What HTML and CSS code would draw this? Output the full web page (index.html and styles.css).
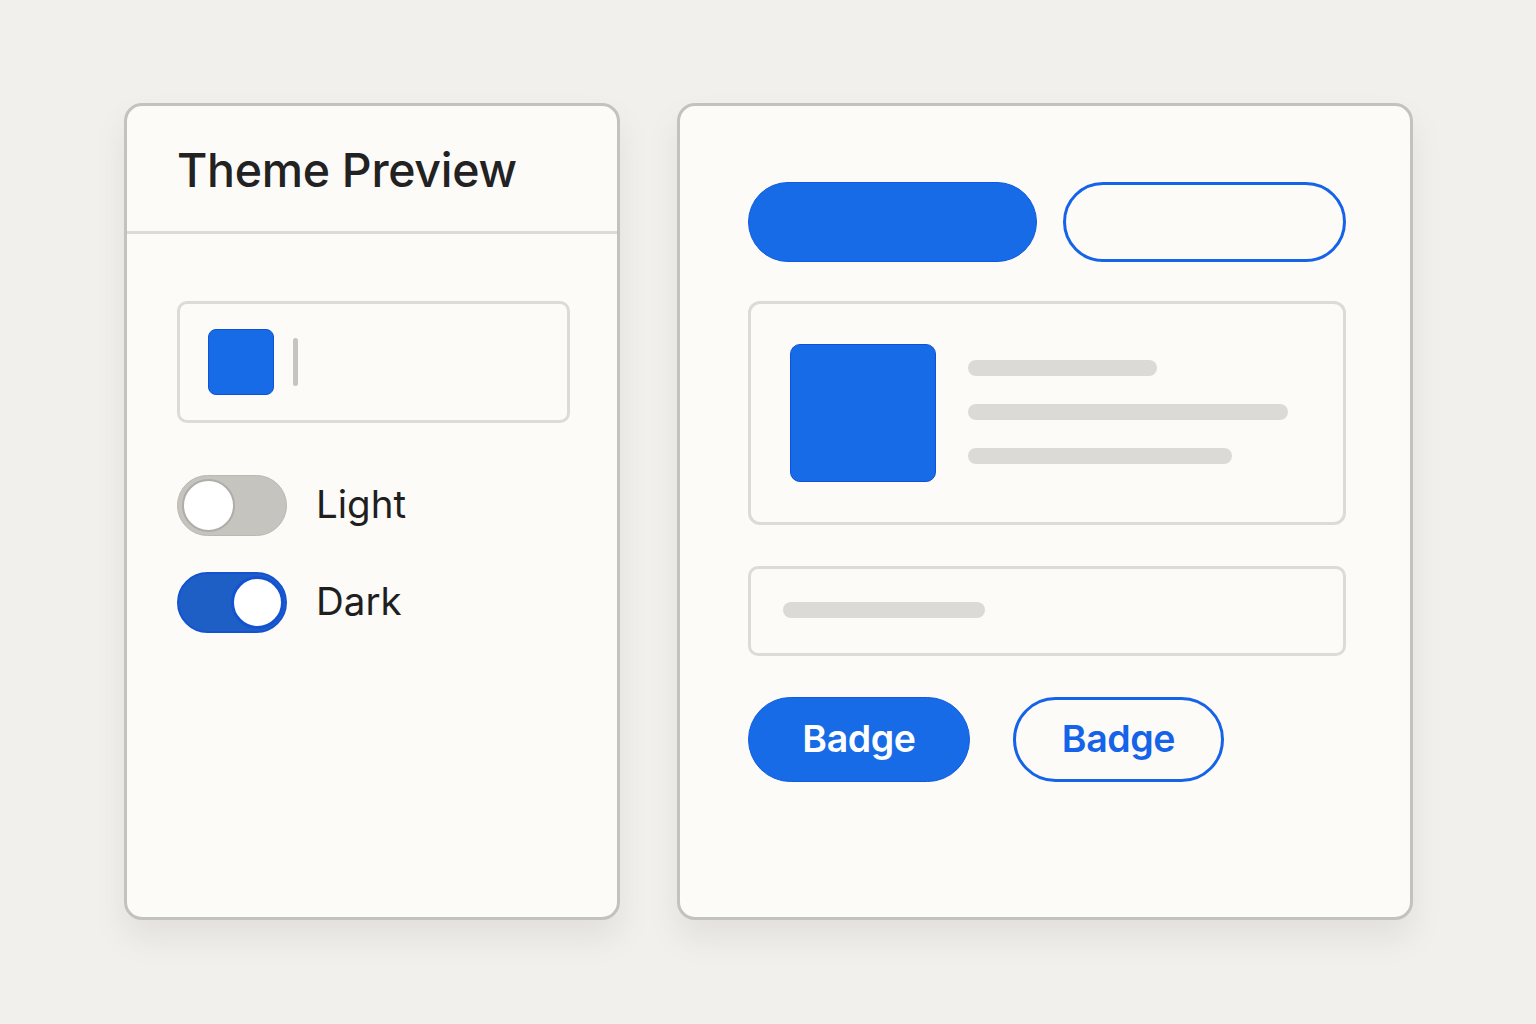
FILE: index.html
```html
<!DOCTYPE html>
<html lang="en">
<head>
<meta charset="utf-8">
<title>Theme Preview</title>
<link rel="stylesheet" href="styles.css">
</head>
<body>
<main class="stage">
  <section class="panel panel-left">
    <header class="panel-header">
      <h1 class="title">Theme Preview</h1>
    </header>
    <div class="left-body">
      <div class="color-input">
        <span class="swatch"></span>
        <span class="caret"></span>
      </div>
      <div class="toggle-row first">
        <span class="toggle off"><span class="knob"></span></span>
        <span class="toggle-label">Light</span>
      </div>
      <div class="toggle-row">
        <span class="toggle on"><span class="knob"></span></span>
        <span class="toggle-label">Dark</span>
      </div>
    </div>
  </section>
  <section class="panel panel-right">
    <div class="btn-row">
      <span class="btn btn-filled"></span>
      <span class="btn btn-outline"></span>
    </div>
    <div class="card">
      <span class="card-media"></span>
      <div class="card-lines">
        <span class="line l1"></span>
        <span class="line l2"></span>
        <span class="line l3"></span>
      </div>
    </div>
    <div class="field">
      <span class="line l4"></span>
    </div>
    <div class="badge-row">
      <span class="badge badge-filled">Badge</span>
      <span class="badge badge-outline">Badge</span>
    </div>
  </section>
</main>
</body>
</html>
```

FILE: styles.css
```css
* { box-sizing: border-box; }
html, body { margin: 0; padding: 0; }
body {
  width: 1536px;
  height: 1024px;
  background: #f2f0ec;
  font-family: Inter, "Noto Sans", "Liberation Sans", sans-serif;
  color: #222222;
  overflow: hidden;
}
.stage {
  display: flex;
  gap: 57px;
  padding: 103px 0 0 124px;
}
.panel {
  background: #fcfbf8;
  border: 3px solid #c4c2bd;
  border-radius: 18px;
  height: 817px;
  box-shadow: 0 18px 30px rgba(120, 115, 105, 0.12);
}
.panel-left { width: 496px; }
.panel-right {
  width: 736px;
  padding: 76px 0 0 68px;
}
.panel-header {
  height: 128px;
  border-bottom: 3px solid #dddbd6;
  display: flex;
  align-items: center;
  padding: 2px 0 0 50px;
}
.title {
  margin: 0;
  font-size: 46.5px;
  font-weight: 500;
  letter-spacing: -0.3px;
  color: #222222;
}
.left-body { padding: 67px 0 0 50px; }
.color-input {
  width: 393px;
  height: 122px;
  border: 3px solid #dddbd6;
  border-radius: 10px;
  display: flex;
  align-items: center;
  padding-left: 28px;
  gap: 19px;
}
.swatch {
  width: 66px;
  height: 66px;
  background: #176be6;
  border: 1px solid #0d52d8;
  border-radius: 8px;
}
.caret {
  width: 5px;
  height: 48px;
  background: #c6c5c0;
  border-radius: 3px;
}
.toggle-row {
  display: flex;
  align-items: center;
  gap: 29px;
  margin-top: 36px;
}
.toggle-row.first { margin-top: 52px; }
.toggle {
  width: 110px;
  height: 61px;
  border-radius: 31px;
  display: flex;
  align-items: center;
  padding: 0 4px;
}
.toggle.off { background: #c5c4be; border: 1px solid #bab9b3; }
.toggle.on { background: #1e5fc6; border: 2px solid #1352d0; justify-content: flex-end; padding: 0 1px; }
.knob {
  width: 53px;
  height: 53px;
  border-radius: 50%;
  background: #ffffff;
}
.toggle.off .knob { border: 2px solid #aeada8; }
.toggle.on .knob { border: 3px solid #1352d0; }
.toggle-label {
  font-size: 38.5px;
  font-weight: 400;
  color: #1f1f1f;
  padding-bottom: 4px;
}
.btn-row {
  display: flex;
  gap: 26px;
}
.btn {
  height: 80px;
  border-radius: 40px;
}
.btn-filled { width: 289px; background: #176be6; border: 1px solid #0f5ae0; }
.btn-outline { width: 283px; border: 3px solid #1463e8; background: #fcfbf8; }
.card {
  margin-top: 39px;
  width: 598px;
  height: 224px;
  border: 3px solid #dddbd6;
  border-radius: 12px;
  display: flex;
  padding: 40px 0 0 39px;
  gap: 32px;
}
.card-media {
  width: 146px;
  height: 138px;
  background: #176be6;
  border: 1px solid #0d52d8;
  border-radius: 10px;
}
.card-lines {
  display: flex;
  flex-direction: column;
  gap: 28px;
  padding-top: 16px;
}
.line {
  display: block;
  height: 16px;
  border-radius: 8px;
  background: #dcdad6;
}
.l1 { width: 189px; }
.l2 { width: 320px; }
.l3 { width: 264px; }
.l4 { width: 202px; }
.field {
  margin-top: 41px;
  width: 598px;
  height: 90px;
  border: 3px solid #dddbd6;
  border-radius: 10px;
  display: flex;
  align-items: center;
  padding: 0 0 2px 32px;
}
.badge-row {
  margin-top: 41px;
  display: flex;
  gap: 43px;
}
.badge {
  height: 85px;
  border-radius: 43px;
  display: flex;
  align-items: center;
  justify-content: center;
  font-size: 37.5px;
  font-weight: 600;
  letter-spacing: -0.4px;
  padding-bottom: 2px;
}
.badge-filled { width: 222px; background: #176be6; color: #ffffff; border: 1px solid #0f5ae0; }
.badge-outline { width: 211px; border: 3px solid #1463e8; color: #1463e8; background: #fcfbf8; }
```
